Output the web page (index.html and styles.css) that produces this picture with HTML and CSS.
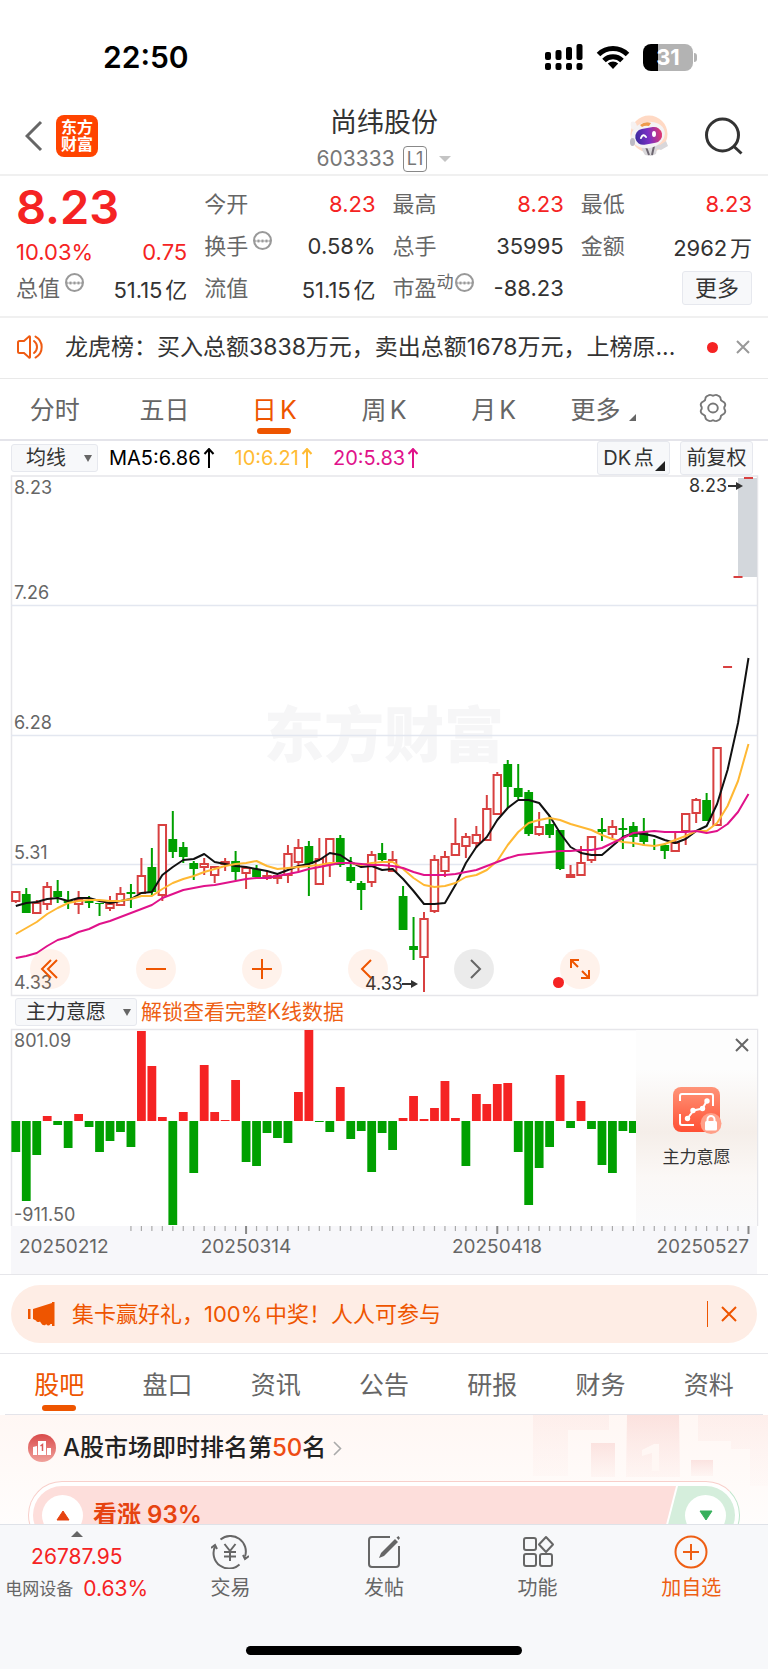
FILE: index.html
```html
<!DOCTYPE html>
<html lang="zh-CN">
<head>
<meta charset="utf-8">
<meta name="viewport" content="width=device-width, initial-scale=1">
<title>尚纬股份 603333</title>
<link rel="stylesheet" href="styles.css">
</head>
<body>
<div class="app">
  <div class="status">
    <time class="clock">22:50</time>
    <div class="status-icons">
      <svg width="38" height="28" viewBox="0 0 38 28" aria-hidden="true">
        <g fill="#000"><rect x="0" y="9" width="6" height="8" rx="2"/><rect x="10.500" y="7" width="6" height="10" rx="2"/><rect x="21" y="4" width="6" height="13" rx="2"/><rect x="31.500" y="1" width="6" height="16" rx="2"/><rect x="0" y="20" width="6" height="7" rx="2"/><rect x="10.500" y="20" width="6" height="7" rx="2"/><rect x="21" y="20" width="6" height="7" rx="2"/><rect x="31.500" y="20" width="6" height="7" rx="2"/></g>
      </svg>
      <svg width="34" height="26" viewBox="0 0 34 26" aria-hidden="true">
        <path d="M2.500 10.500a20.500 20.500 0 0 1 29 0M8 16.500a12.800 12.800 0 0 1 18 0" fill="none" stroke="#000" stroke-width="5"/>
        <path d="M17 25l-5.200-5.400a7.400 7.400 0 0 1 10.400 0z"/>
      </svg>
      <span class="battery"><b>31</b></span>
    </div>
  </div>

  <header class="header">
    <div class="header-left">
      <button class="plain" aria-label="返回"><svg width="18" height="32" viewBox="0 0 18 32"><path d="M16 2L2 16l14 14" fill="none" stroke="#666" stroke-width="3"/></svg></button>
      <span class="brand">东方<br>财富</span>
    </div>
    <div class="header-title">
      <h1>尚纬股份</h1>
      <p><span>603333</span><span class="level">L1</span><i class="caret-light"></i></p>
    </div>
    <div class="header-right">
      <button class="plain" aria-label="智能助手">
        <svg width="40" height="42" viewBox="0 0 40 42">
          <defs><linearGradient id="visor" x1="0" x2="1"><stop offset="0" stop-color="#3c2a9e"/><stop offset=".5" stop-color="#7a2fc4"/><stop offset="1" stop-color="#e0386e"/></linearGradient></defs>
          <circle cx="20" cy="19" r="18.500" fill="#ffd9c4"/>
          <path d="M12 29l10-2 9 3 6-4 2 5-7 4-4-1-1 5-5 2-6-1-3-5z" fill="#d9d7da"/>
          <path d="M17 32l3 8M25 31l-2 9" stroke="#6d6670" stroke-width="2"/>
          <path d="M2 7c4-2 6 2 6 5l-4 3C2 13 1 10 2 7z" fill="#f6f2f2"/>
          <ellipse cx="19" cy="20" rx="17" ry="13" fill="#f4f2f4" transform="rotate(-12 19 20)"/>
          <path d="M11 10q5-4 11-2l-2 3q-4-1-7 1z" fill="#ef9a4c"/>
          <rect x="6" y="13" width="27" height="16" rx="8" fill="url(#visor)" transform="rotate(-10 19 20)"/>
          <path d="M12 23q2-5 5-1" fill="none" stroke="#fff" stroke-width="2" stroke-linecap="round"/><ellipse cx="25" cy="19" rx="2" ry="3" fill="#fff"/>
          <ellipse cx="3.500" cy="27" rx="2.500" ry="4" fill="#bdbac4"/>
        </svg>
      </button>
      <button class="plain" aria-label="搜索"><svg width="38" height="38" viewBox="0 0 38 38"><circle cx="17.500" cy="18" r="16" fill="none" stroke="#333" stroke-width="3"/><path d="M29 29.500l7.500 7" stroke="#333" stroke-width="3"/></svg></button>
    </div>
  </header>

  <main class="scroll">
    <section class="quote">
      <div class="col">
        <strong class="price">8.23</strong>
        <div class="cell change up"><span>10.03%</span><span>0.75</span></div>
        <div class="cell"><span class="k">总值<i class="info"></i></span><span>51.15亿</span></div>
      </div>
      <div class="col">
        <div class="cell"><span class="k">今开</span><span class="up">8.23</span></div>
        <div class="cell"><span class="k">换手<i class="info"></i></span><span>0.58%</span></div>
        <div class="cell"><span class="k">流值</span><span>51.15亿</span></div>
      </div>
      <div class="col">
        <div class="cell"><span class="k">最高</span><span class="up">8.23</span></div>
        <div class="cell"><span class="k">总手</span><span>35995</span></div>
        <div class="cell"><span class="k">市盈<small>动</small><i class="info tight"></i></span><span>-88.23</span></div>
      </div>
      <div class="col">
        <div class="cell"><span class="k">最低</span><span class="up">8.23</span></div>
        <div class="cell"><span class="k">金额</span><span>2962万</span></div>
        <div class="cell end"><button class="chip more">更多</button></div>
      </div>
    </section>

    <section class="notice">
      <svg width="30" height="26" viewBox="0 0 30 26" aria-hidden="true"><path d="M2 8.500q0-1.500 1.500-1.500H8l5-4.500q1-.5 1 .5v20q0 1-1 .5L8 19H3.500Q2 19 2 17.500zM18 7a7.500 7.500 0 0 1 0 12M19.500 2.500a12 12 0 0 1 0 21" fill="none" stroke="#ef5b12" stroke-width="2" stroke-linecap="round"/></svg>
      <p>龙虎榜：买入总额3838万元，卖出总额1678万元，上榜原...</p>
      <i class="dot"></i>
      <button class="plain" aria-label="关闭公告"><svg width="14" height="14" viewBox="0 0 14 14"><path d="M1 1l12 12M13 1L1 13" stroke="#999" stroke-width="2"/></svg></button>
    </section>

    <nav class="tabs">
      <button>分时</button><button>五日</button><button class="on">日K</button><button>周K</button><button>月K</button>
      <button class="with-corner">更多<i class="corner"></i></button>
      <button aria-label="设置"><svg width="32" height="30" viewBox="0 0 30 30" preserveAspectRatio="none"><path d="M10.500 2.500q1.500-1 3-.3l1.500.6 1.500-.6q1.500-.7 3 .3l1.300.8q1.200.9 1.400 2.400l.3 1.600 1.300 1 1.500.9q1.200 1 1.200 2.500 0 1.200-.9 2.300v2q.9 1 .9 2.300 0 1.500-1.200 2.500l-1.500.9-1.300 1-.3 1.600q-.2 1.500-1.400 2.400l-1.300.8q-1.500 1-3 .3l-1.500-.6-1.500.6q-1.500.7-3-.3l-1.300-.8q-1.200-.9-1.400-2.400l-.3-1.600-1.300-1-1.500-.9q-1.200-1-1.200-2.500 0-1.300.9-2.300v-2q-.9-1.100-.9-2.300 0-1.500 1.200-2.500l1.500-.9 1.300-1 .3-1.600q.2-1.500 1.400-2.400z" fill="none" stroke="#777" stroke-width="1.800"/><circle cx="15" cy="15" r="4.500" fill="none" stroke="#777" stroke-width="1.800"/></svg></button>
    </nav>

    <div class="toolbar">
      <span class="pick"><select aria-label="主图指标"><option>均线</option></select></span>
      <span class="ma ma5">MA5:6.86<svg width="12" height="20" viewBox="0 0 12 20"><path d="M6 20V1M1.500 6L6 1l4.500 5"/></svg></span>
      <span class="ma ma10">10:6.21<svg width="12" height="20" viewBox="0 0 12 20"><path d="M6 20V1M1.500 6L6 1l4.500 5"/></svg></span>
      <span class="ma ma20">20:5.83<svg width="12" height="20" viewBox="0 0 12 20"><path d="M6 20V1M1.500 6L6 1l4.500 5"/></svg></span>
      <div class="toolbar-end">
        <button class="chip dk">DK点<i class="corner dark"></i></button>
        <button class="chip adjust">前复权</button>
      </div>
    </div>

    <div class="chart">
      <svg id="kline" viewBox="0 0 768 520" role="img" aria-label="日K线图">
        <text class="watermark" x="384" y="282" text-anchor="middle">东方财富</text>
        <path class="frame" d="M11.500 1h746v519.500h-746z"/>
        <path class="grid" d="M11 130.500h746M11 260.500h746M11 389.500h746"/>
        <rect x="738" y="3" width="19" height="99" fill="#d3d7dc"/>
        <g id="candles"></g>
        <g id="averages"></g>
        <g class="axis-label"><text x="14" y="19">8.23</text><text x="14" y="124">7.26</text><text x="14" y="254">6.28</text><text x="14" y="384">5.31</text><text x="14" y="514">4.33</text></g>
        <g class="mark"><text x="689" y="17">8.23</text><text x="365" y="515">4.33</text>
          <path d="M728 11h10M402 509h10" stroke="#333" stroke-width="2"/><path d="M736 7l7 4-7 4zM411 505l7 4-7 4z"/></g>
      </svg>
      <div class="controls">
        <button aria-label="最早"><svg width="24" height="24" viewBox="0 0 24 24"><path d="M13 3l-9 9 9 9M19 3l-9 9 9 9"/></svg></button>
        <button aria-label="缩小"><svg width="24" height="24" viewBox="0 0 24 24"><path d="M2 12h20"/></svg></button>
        <button aria-label="放大"><svg width="24" height="24" viewBox="0 0 24 24"><path d="M2 12h20M12 2v20"/></svg></button>
        <button aria-label="左移"><svg width="24" height="24" viewBox="0 0 24 24"><path d="M15 3l-9 9 9 9"/></svg></button>
        <button class="off" aria-label="右移"><svg width="24" height="24" viewBox="0 0 24 24"><path d="M9 3l9 9-9 9"/></svg></button>
        <button class="full" aria-label="全屏"><svg width="24" height="24" viewBox="0 0 24 24"><path d="M3 11V3h8M3 3l7 7M21 13v8h-8M21 21l-7-7"/></svg><i class="dot"></i></button>
      </div>
    </div>

    <div class="toolbar second">
      <span class="pick wide"><select aria-label="副图指标"><option>主力意愿</option></select></span>
      <a class="unlock" href="#">解锁查看完整K线数据</a>
    </div>

    <div class="chart">
      <svg id="intent" viewBox="0 0 768 245" role="img" aria-label="主力意愿柱状图">
        <path class="frame" d="M11.500 197V.500h746V197"/>
        <rect x="11" y="197" width="746" height="48" fill="#f7f7fa"/>
        <g id="bars"></g>
        <g id="ticks"></g>
        <g class="axis-label"><text x="14" y="18">801.09</text><text x="14" y="192">-911.50</text></g>
        <g class="date"><text x="19" y="224">20250212</text><text x="246" y="224" text-anchor="middle">20250314</text><text x="497" y="224" text-anchor="middle">20250418</text><text x="749" y="224" text-anchor="end">20250527</text></g>
      </svg>
      <aside class="locked">
        <button class="plain close" aria-label="关闭"><svg width="14" height="14" viewBox="0 0 14 14"><path d="M1 1l12 12M13 1L1 13" stroke="#666" stroke-width="2"/></svg></button>
        <svg width="50" height="48" viewBox="0 0 50 48" aria-hidden="true">
          <defs><linearGradient id="lk" x1="0" y1="0" x2="0" y2="1"><stop offset="0" stop-color="#ff9478"/><stop offset="1" stop-color="#ff4f33"/></linearGradient></defs>
          <rect x="1" y="1" width="47" height="45" rx="8" fill="url(#lk)"/>
          <path d="M8 15v-5q0-2 2-2h29q2 0 2 2v10M8 28v9q0 2 2 2h12" fill="none" stroke="#fff" stroke-width="2"/>
          <path d="M15.500 32.500l6-8 9-2 4.500-8" fill="none" stroke="#fff" stroke-width="2"/>
          <g fill="#fff"><circle cx="15.500" cy="32.500" r="2.700"/><circle cx="21" cy="24.500" r="2.700"/><circle cx="30.500" cy="22.500" r="2.700"/><circle cx="35" cy="15" r="2.700"/></g>
          <circle cx="39" cy="37.500" r="10.500" fill="#ff9f88"/><rect x="33" y="35" width="12" height="9.500" rx="1.500" fill="#fff"/><path d="M35.500 36v-2.500a3.500 3.500 0 0 1 7 0V36" fill="none" stroke="#fff" stroke-width="2"/>
        </svg>
        <span>主力意愿</span>
      </aside>
    </div>

    <section class="promo-wrap">
      <div class="promo">
        <svg width="28" height="24" viewBox="0 0 28 24" aria-hidden="true"><path d="M0 7h2.500v10H0zM5 7L24 1V0h2.500v24H24v-2h-1.500q-2 3-4.500 0l-.5 1q-3 1-4.500-2L12 19.500q-3 1.500-4-1L5 17z" fill="#ee5500"/></svg>
        <a href="#">集卡赢好礼，100%中奖！人人可参与</a>
        <i class="bar"></i>
        <button class="plain" aria-label="关闭活动"><svg width="16" height="16" viewBox="0 0 16 16"><path d="M1 1l14 14M15 1L1 15" stroke="#ee5500" stroke-width="2"/></svg></button>
      </div>
    </section>

    <nav class="tabs sections">
      <button class="on">股吧</button><button>盘口</button><button>资讯</button><button>公告</button><button>研报</button><button>财务</button><button>资料</button>
    </nav>

    <section class="rank">
      <svg class="podium" width="235" height="71" viewBox="0 0 235 71" aria-hidden="true">
        <defs><linearGradient id="pd" x1="0" y1="0" x2="0" y2="1"><stop offset="0" stop-color="#f6c4c0" stop-opacity=".42"/><stop offset="1" stop-color="#f9d0cc" stop-opacity=".12"/></linearGradient></defs>
        <g fill="url(#pd)"><path d="M0 0h76v15H35v46H0zM165 0h70v71h-18V34h-19v-8h-33z" opacity=".4"/><path d="M58 28h24v34H58z"/><path d="M94 0h52l1 62H93z"/><path d="M158 45h22v16h-22z"/></g>
        <path d="M109 35l12-6h5v27h-7V38l-10 3z" fill="#fff7f4"/>
      </svg>
      <a class="rank-title" href="#">
        <svg width="28" height="28" viewBox="0 0 28 28" aria-hidden="true"><defs><linearGradient id="rk" x1="0" y1="0" x2="0" y2="1"><stop offset="0" stop-color="#d94b4b"/><stop offset="1" stop-color="#f0a19b"/></linearGradient></defs><circle cx="14" cy="14" r="14" fill="url(#rk)"/><path d="M5 13l4-1v9H5zM10 7h8v14h-8zM19 14h4v7h-4z" fill="#fff"/><path d="M12.500 12l2-1.500V17" fill="none" stroke="#d95a58" stroke-width="1.500"/></svg>
        <span>A股市场即时排名第<em>50</em>名</span>
        <svg width="9" height="15" viewBox="0 0 9 15"><path d="M1 1l6.500 6.500L1 14" fill="none" stroke="#aaa" stroke-width="1.600"/></svg>
      </a>
      <div class="vote">
        <button class="bull"><i class="ball"><svg width="14" height="11" viewBox="0 0 14 11"><path d="M7 1l6 9H1z" fill="#e64310" stroke="#e64310" stroke-linejoin="round"/></svg></i>看涨 93%</button>
        <button class="bear" aria-label="看跌"><i class="ball"><svg width="14" height="11" viewBox="0 0 14 11"><path d="M7 10l6-9H1z" fill="#37b05c" stroke="#37b05c" stroke-linejoin="round"/></svg></i></button>
      </div>
    </section>
  </main>

  <footer class="dock">
    <nav>
      <a class="index" href="#"><i class="caret-up"></i><b>26787.95</b><span><small>电网设备</small>0.63%</span></a>
      <a href="#"><svg width="38" height="34" viewBox="0 0 38 34"><g fill="none" stroke="#666" stroke-width="2"><path d="M9.500 4.500A15.500 15.500 0 0 1 34 21.500M28.500 29.500A15.500 15.500 0 0 1 4 11.500"/><path d="M0 13l4-3L6 14M38 21l-4 3L32 20M13.500 9l5.500 7 5.500-7M19 16v10M13 17h12M13 21.500h12"/></g></svg>交易</a>
      <a href="#"><svg width="34" height="34" viewBox="0 0 34 34"><path d="M23 2H5Q2 2 2 5v24q0 3 3 3h24q3 0 3-3V11" fill="none" stroke="#666" stroke-width="2"/><path d="M12 23l2-5L28 4l3 3-14 14z" fill="#666"/><path d="M29.500 2.500l2-1.500L33 3l-1.500 2z" fill="#666"/></svg>发帖</a>
      <a href="#"><svg width="34" height="34" viewBox="0 0 34 34"><g fill="none" stroke="#666" stroke-width="2"><rect x="3" y="3" width="12" height="12" rx="2"/><rect x="3" y="19" width="12" height="12" rx="2"/><rect x="19" y="19" width="12" height="12" rx="2"/><path d="M25 2l7 7.500-7 7.500-7-7.500z" stroke-linejoin="round"/></g></svg>功能</a>
      <a class="add" href="#"><svg width="34" height="34" viewBox="0 0 34 34"><circle cx="17" cy="17" r="15.500" fill="none" stroke="#ee5f14" stroke-width="2"/><path d="M9 17h16M17 9v16" stroke="#ee5f14" stroke-width="2"/></svg>加自选</a>
    </nav>
    <i class="home"></i>
  </footer>
</div>
<script src="chart.js"></script>
</body>
</html>
```
FILE: styles.css
```css
* { box-sizing: border-box; }
body { margin: 0; background: #fff; color: #333; font-family: Inter, "Noto Sans CJK SC", sans-serif; font-size: 22px; text-autospace: normal; }
button, select { font: inherit; color: inherit; margin: 0; padding: 0; border: 0; background: none; }
a { color: inherit; text-decoration: none; }
i, em { font-style: normal; }
h1, p { margin: 0; }
svg { display: block; flex: none; }
.app { height: 100vh; display: flex; flex-direction: column; }
.plain { display: block; }
.up { color: #f52323; }

.status { flex: none; height: 106px; padding: 8px 75px 0 103px; display: flex; align-items: center; justify-content: space-between; }
.clock { font-size: 30px; font-weight: 600; line-height: 36px; color: #000; }
.status-icons { display: flex; align-items: center; gap: 13px; }
.battery { position: relative; width: 50px; height: 27px; border-radius: 8px; background: linear-gradient(90deg, #000 15px, #b3b3b3 15px); color: #fff; text-align: center; font-size: 22px; line-height: 27px; }
.battery::after { content: ""; position: absolute; right: -4px; top: 9px; width: 3px; height: 9px; border-radius: 0 3px 3px 0; background: #b3b3b3; }

.header { flex: none; height: 70px; padding: 0 25px; display: grid; grid-template-columns: 1fr auto 1fr; border-bottom: 2px solid #f0f0f0; }
.header-left, .header-right { display: flex; align-items: center; padding-bottom: 8px; }
.header-left { gap: 13px; }
.header-right { justify-content: flex-end; gap: 36px; }
.brand { width: 42px; height: 42px; padding-top: 4px; border-radius: 8px; background: #ff4400; color: #fff; font-size: 16px; font-weight: 700; line-height: 17px; text-align: center; }
.header-title h1 { font-size: 27px; font-weight: 400; line-height: 34px; text-align: center; }
.header-title p { display: flex; align-items: center; justify-content: center; gap: 8px; padding-top: 5px; line-height: 28px; font-size: 21px; color: #777; }
.level { padding: 0 3px; border: 1px solid #888; border-radius: 4px; font-size: 18px; line-height: 24px; }
.caret-light { margin-left: 4px; border: 6px solid transparent; border-top-color: #c4c4c4; border-bottom: 0; }

.scroll { flex: 1; min-height: 0; overflow: hidden auto; scrollbar-width: none; }

.quote { padding: 7px 16px 7px 16px; display: grid; grid-template-columns: repeat(4, 1fr); column-gap: 17px; border-bottom: 2px solid #f0f0f0; }
.col { display: flex; flex-direction: column; }
.price { line-height: 48px; font-size: 47px; font-weight: 600; color: #f52323; }
.cell { display: flex; align-items: center; justify-content: space-between; height: 42px; white-space: nowrap; }
.change { height: 36px; padding-top: 5px; }
.end { justify-content: flex-end; }
.k { display: flex; line-height: 30px; color: #666; }
.k small { font-size: 17px; line-height: 18px; }
.info { width: 19px; height: 19px; margin-left: 5px; border: 2px solid #999; border-radius: 50%; background: radial-gradient(circle, #999 1px, transparent 2px) center / 4px 4px repeat-x; }
.tight { margin-left: 1px; }
.chip { border: 1px solid #e6e8ee; border-radius: 3px; background: #f7f8fa; color: #333; }
.more { width: 70px; height: 34px; line-height: 30px; }

.notice { display: flex; align-items: center; height: 61px; padding: 0 18px 2px 16px; border-bottom: 1px solid #e9e9e9; }
.notice p { flex: 1; min-width: 0; margin-left: 19px; font-size: 23px; white-space: nowrap; overflow: hidden; line-height: 32px; text-autospace: no-autospace; }
.dot { width: 11px; height: 11px; border-radius: 50%; background: #f52323; }
.notice .dot { margin-right: 18px; }

.tabs { display: grid; grid-template-columns: repeat(7, 1fr); height: 62px; border-bottom: 2px solid #e4e4ea; color: #666; font-size: 25px; }
.tabs button { position: relative; display: flex; align-items: center; justify-content: center; padding-bottom: 2px; }
.tabs .on { color: #ee5500; }
.tabs .on::after { content: ""; position: absolute; bottom: 5px; left: calc(50% - 17px); width: 34px; height: 6px; border-radius: 3px; background: #ee5500; }
.corner { border-left: 7px solid transparent; border-bottom: 7px solid #666; }
.with-corner { gap: 9px; }
.with-corner .corner { align-self: flex-end; margin-bottom: 16px; }
.sections { height: 61px; margin: 0 5px; border-width: 1px; }
.sections .on::after { bottom: 3px; }

.toolbar { display: flex; align-items: center; height: 34px; padding: 0 15px 0 11px; }
.second { padding-left: 15px; }
.pick { position: relative; width: 87px; height: 28px; border: 1px solid #e6e8ee; border-radius: 3px; background: #f7f8fa; font-size: 20px; }
.pick::after { content: ""; position: absolute; right: 5px; top: 10px; border: 4px solid transparent; border-top: 7px solid #666; border-bottom: 0; }
.pick select { display: block; width: 100%; height: 26px; padding-left: 14px; appearance: none; line-height: 26px; }
.wide { width: 122px; }
.wide select { padding-left: 10px; }
.ma { display: flex; align-items: center; gap: 2px; margin-right: 20px; font-size: 20px; line-height: 28px; }
.ma svg { fill: none; stroke: currentColor; stroke-width: 2; }
.ma5 { margin-left: 11px; color: #000; }
.ma10 { color: #ffbb33; }
.ma20 { color: #e0128a; }
.toolbar-end { display: flex; gap: 10px; margin-left: auto; }
.toolbar-end .chip { position: relative; width: 73px; height: 34px; line-height: 30px; font-size: 20px; white-space: nowrap; }
.toolbar-end .dk { padding-right: 10px; }
.dk .corner { position: absolute; right: 4px; bottom: 3px; border-left-width: 10px; border-bottom: 10px solid #222; }
.unlock { margin-left: 4px; color: #ee5f14; font-size: 21px; line-height: 28px; text-autospace: no-autospace; }

.chart { position: relative; }
.chart > svg { width: 100%; height: auto; overflow: visible; }
.frame { fill: none; stroke: #e6e6ea; stroke-width: 1.500; }
.grid { stroke: #e3e7f0; stroke-width: 1.500; }
.watermark { font-size: 60px; font-weight: 900; fill: #f6f6f7; }
.axis-label { font-size: 18px; fill: #666; }
.mark { font-size: 18px; fill: #333; }
.date { font-size: 19px; fill: #666; }
.rise-line { stroke: #d84040; stroke-width: 2; }
.rise-box { fill: #fff; stroke: #d84040; stroke-width: 2; }
.fall-line { stroke: #00a000; stroke-width: 2; }
.fall-box { fill: #00a000; }
.line { fill: none; stroke-width: 2; stroke-linejoin: round; }
.line5 { stroke: #111; }
.line10 { stroke: #ffb833; }
.line20 { stroke: #e0128a; }
.bar-up { fill: #f52323; }
.tick { stroke: #aaa; stroke-width: 1.200; }
.tick-major { stroke: #888; stroke-width: 2; }

.controls { position: absolute; left: 30px; bottom: 6px; display: flex; gap: 66px; }
.controls button { position: relative; width: 40px; height: 40px; padding: 8px; border-radius: 50%; background: rgba(255, 85, 0, .08); }
.controls svg { fill: none; stroke: #ee5500; stroke-width: 2; }
.controls .off { background: rgba(0, 0, 0, .08); }
.controls .off svg { stroke: #666; }
.controls .dot { position: absolute; left: -7px; bottom: 1px; }

.locked { position: absolute; right: 11px; top: 1px; width: 121px; height: 196px; padding-top: 56px; display: flex; flex-direction: column; align-items: center; gap: 10px; background: linear-gradient(#fdfdfd 20%, #f5eee9 52%, #fbf8f6 75%, #fafafb); font-size: 17px; line-height: 26px; }
.close { position: absolute; right: 8px; top: 8px; }

.promo-wrap { padding: 10px 11px; border-top: 1px solid #e6e6ea; border-bottom: 1px solid #e6e6ea; }
.promo { display: flex; align-items: center; height: 58px; padding: 0 20px 0 17px; border-radius: 29px; background: #feede5; color: #ee5500; }
.promo a { flex: 1; margin-left: 16px; line-height: 32px; white-space: nowrap; }
.bar { width: 1px; height: 26px; margin-right: 13px; background: #ee5500; }

.rank { position: relative; padding: 15px 28px 20px; background: linear-gradient(#fff7f4, #fffdfc 110px); }
.podium { position: absolute; right: 0; top: 0; }
.rank-title { position: relative; display: flex; align-items: center; gap: 7px; font-size: 24px; font-weight: 500; line-height: 36px; color: #222; text-autospace: no-autospace; }
.rank-title em { color: #ee4c14; }
.vote { position: relative; display: flex; height: 68px; margin-top: 15px; padding: 4px; border: 1px solid #f8cfca; border-right-color: #bfe5cb; border-radius: 34px; background: #fff; }
.bull { flex: 1; display: flex; align-items: center; gap: 10px; padding-left: 9px; border-radius: 29px 0 0 29px; background: #fddedb; color: #e64310; font-size: 24px; line-height: 30px; font-weight: 600; clip-path: polygon(0 0, 100% 0, calc(100% - 15px) 100%, 0 100%); }
.bear { width: 72px; display: flex; align-items: center; justify-content: flex-end; margin-left: -13px; padding-right: 9px; border-radius: 0 29px 29px 0; background: #d5eedc; clip-path: polygon(15px 0, 100% 0, 100% 100%, 0 100%); }
.ball { width: 41px; height: 41px; display: grid; place-items: center; border-radius: 50%; background: #fff; }

.dock { flex: none; height: 145px; border-top: 1px solid #dfe2e8; background: #f7f8fa; }
.dock nav { display: grid; grid-template-columns: repeat(5, 1fr); height: 121px; }
.dock a { display: flex; flex-direction: column; align-items: center; padding-top: 10px; gap: 5px; font-size: 20px; line-height: 28px; color: #666; }
.dock .index { gap: 4px; padding-top: 6px; font-size: 21px; color: #f52323; white-space: nowrap; }
.index b { padding-top: 2px; font-weight: 400; }
.index span { display: flex; align-items: center; gap: 10px; }
.index small { font-size: 17px; color: #666; }
.caret-up { border: 6px solid transparent; border-bottom-color: #666; border-top: 0; }
.dock .add { color: #ee5f14; }
.home { display: block; width: 36%; height: 9px; margin: 0 auto; border-radius: 5px; background: #000; }
```
FILE: chart.js
```js
const NS = 'http://www.w3.org/2000/svg';
const x = i => 15.8 + 10.467 * i;

function add(parent, tag, attrs) {
  const node = document.createElementNS(NS, tag);
  for (const key in attrs) node.setAttribute(key, attrs[key]);
  parent.appendChild(node);
}

// direction, body top, body bottom, high, low
const candles = `r417,426,416,428 g419,438,413,438 r428,438,425,439 r412,429,407,435 g416,422,405,428 g425,428,416,434
r425,429,416,439 g426,428,421,433 g428,429,428,441 r429,433,421,436 r419,430,412,430 g417,419,409,433
r401,418,383,419 g392,417,373,420 r350,420,350,426 g364,377,336,383 g372,382,367,388 g388,394,386,405
r389,392,383,400 r392,400,392,408 r387,389,383,396 g386,397,376,405 r393,398,392,414 g394,402,390,403
r401,403,397,405 r401,403,400,409 r379,400,370,408 r373,387,364,397 g371,389,366,421 r384,409,363,409
r364,389,363,402 g363,390,360,392 g392,406,382,408 g408,415,406,435 r380,407,376,412 g378,385,368,388
r385,396,376,396 g421,455,411,455 g471,475,442,485 r444,482,437,517 r385,436,380,438 r382,396,376,402
r369,380,343,380 r362,371,358,383 r360,368,351,373 r334,365,320,365 r300,339,297,339 g289,312,285,333
g313,322,289,324 g317,359,315,361 r352,359,337,361 g349,360,341,363 g355,394,355,395 r400,402,390,402
r388,400,371,400 r362,385,361,388 g354,357,343,366 r352,359,345,363 g353,355,343,374 g351,362,347,372
g357,367,343,371 g370,371,364,375 g370,376,368,384 r368,376,357,376 r339,356,339,370 r325,338,323,348
g325,346,318,346 r273,350,273,350 r192,192,192,192 r102,102,102,102 r3,3,3,3`.split(/\s+/);

const candleLayer = document.getElementById('candles');
candles.forEach((item, i) => {
  const rise = item[0] === 'r';
  const [top, bottom, high, low] = item.slice(1).split(',').map(Number);
  const kind = rise ? 'rise' : 'fall';
  if (top === bottom) {
    add(candleLayer, 'path', { class: kind + '-line', d: `M${x(i) - 4.5} ${top}h9` });
    return;
  }
  add(candleLayer, 'path', { class: kind + '-line', d: `M${x(i)} ${high}V${low}` });
  const inset = rise ? 3.7 : 4.4;
  add(candleLayer, 'rect', { class: kind + '-box', x: x(i) - inset, y: top, width: inset * 2, height: bottom - top });
});

const averages = {
  line5: [431,428,427,424,423,426,423,423,426,428,426,424,418,417,400,392,385,384,379,387,389,391,392,394,
    396,399,395,391,389,385,378,380,387,392,391,395,394,404,416,429,429,428,410,388,372,362,345,333,
    325,325,328,341,358,372,378,380,380,371,362,358,359,361,365,368,364,356,351,329,295,248,183],
  line10: [459,453,447,439,433,428,426,425,425,426,426,424,421,421,414,408,404,401,397,394,391,389,388,386,
    391,394,393,392,391,390,388,388,388,390,388,387,387,394,403,410,412,411,408,402,400,395,386,370,
    357,348,345,343,345,349,352,355,360,364,367,368,370,371,369,365,361,356,356,348,331,306,269],
  line20: [483,481,478,471,465,462,457,454,449,446,442,438,434,430,423,419,415,413,411,410,408,406,404,403,
    403,401,399,397,394,392,390,388,388,389,390,390,391,393,397,400,400,400,399,397,395,391,387,383,
    380,379,378,377,376,376,375,375,373,368,363,358,357,356,357,357,357,356,358,356,349,337,319]
};
for (const name in averages) {
  const points = averages[name].map((y, i) => `${x(i)},${y}`).join(' ');
  add(document.getElementById('averages'), 'polyline', { class: 'line ' + name, points });
}

const bars = [-31,-80,-34,5,-4,-27,7,-6,-31,-20,-11,-26,90,55,4,-104,9,-52,56,9,1,41,-41,-45,-12,-17,-22,29,91,-1,
  -11,34,-18,-10,-51,-12,-29,3,25,2,13,40,3,-45,27,17,37,38,-31,-84,-47,-26,46,-7,20,-8,-44,-52,-10,-12];
bars.forEach((value, i) => {
  add(document.getElementById('bars'), 'rect', {
    class: value > 0 ? 'bar-up' : 'fall-box',
    x: x(i) - 4.4, y: value > 0 ? 92 - value : 92, width: 8.8, height: Math.abs(value)
  });
});

for (let i = 11; i <= 70; i++) {
  const major = (i + 2) % 24 === 0;
  add(document.getElementById('ticks'), 'path', { class: major ? 'tick-major' : 'tick', d: `M${x(i)} 197v${major ? 8 : 5}` });
}
```
